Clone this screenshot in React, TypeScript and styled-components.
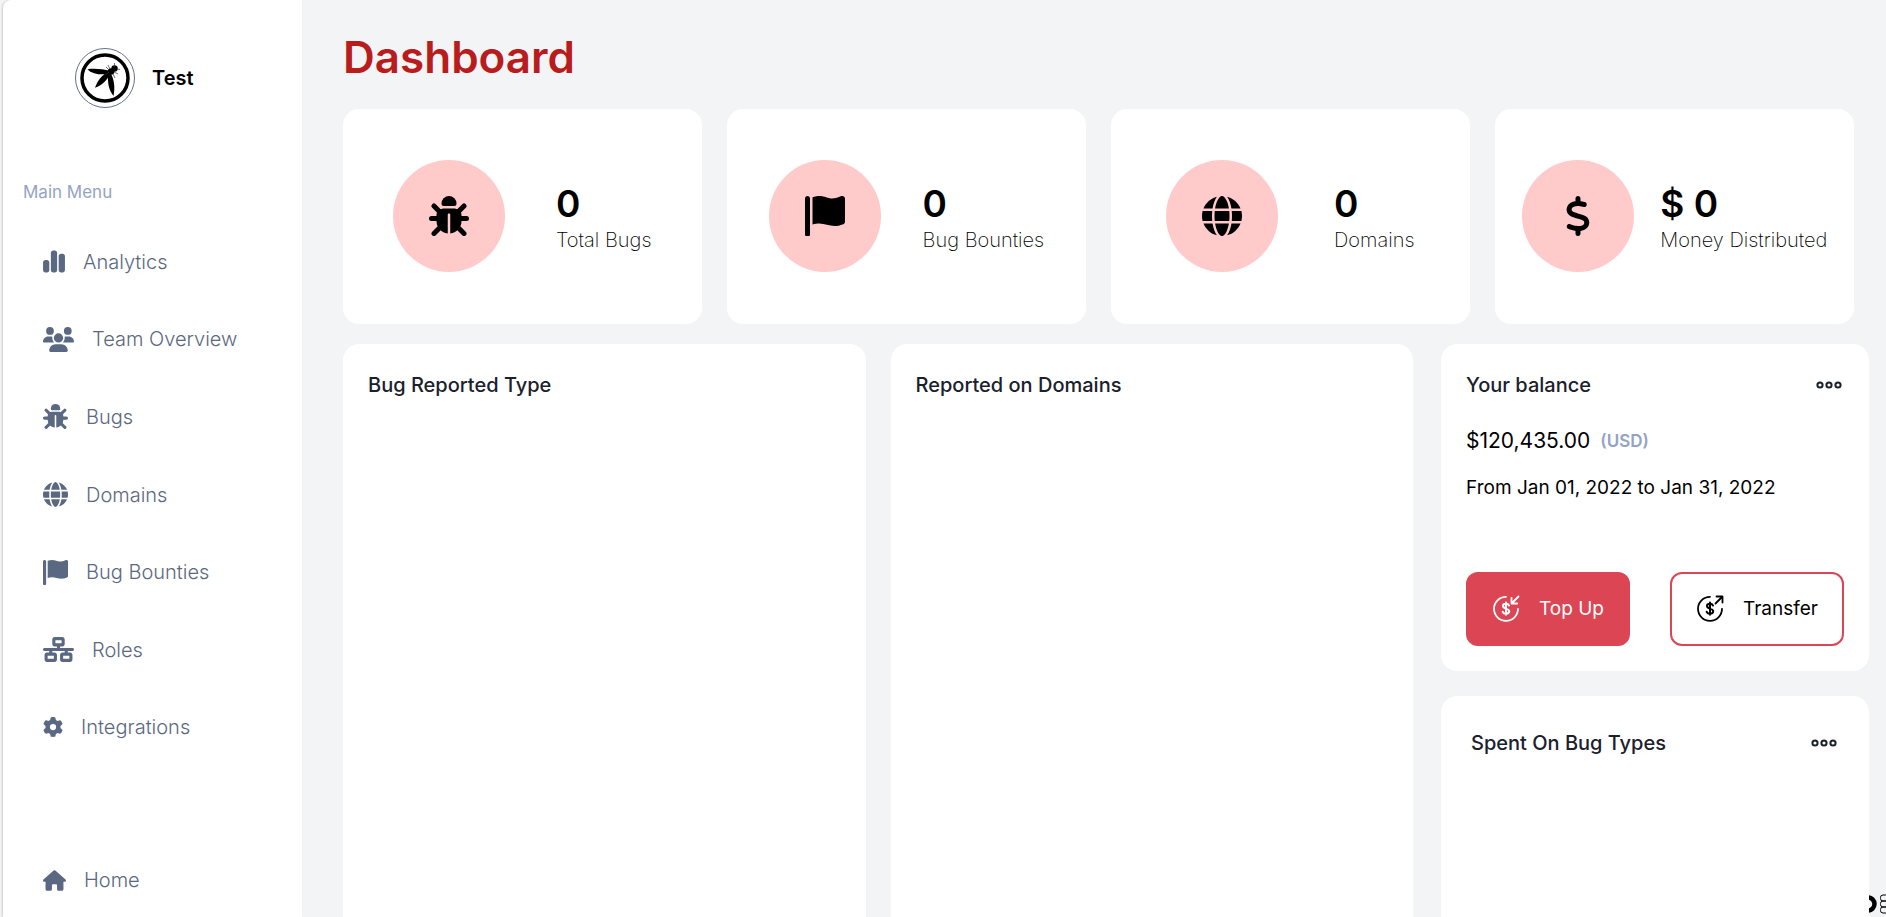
import React from 'react';
import styled, { createGlobalStyle, css } from 'styled-components';
import {
  FaChartSimple,
  FaDollarSign,
  FaGear,
  FaGlobe,
  FaHouse,
  FaNetworkWired,
  FaUsers,
} from 'react-icons/fa6';

const GlobalStyle = createGlobalStyle`
  *, *::before, *::after { box-sizing: border-box; }
  body {
    margin: 0;
    background: #f3f4f6;
    color: #000;
    font-family: Inter, 'Open Sans', sans-serif;
    font-size: 20px;
    line-height: 28px;
  }
  h1, h2, p, ul { margin: 0; padding: 0; }
  button { font: inherit; cursor: pointer; }
`;

const Page = styled.div`
  position: relative;
  display: flex;
  height: 100vh;
  overflow: hidden;
`;

/* ---------- sidebar ---------- */

const Sidebar = styled.aside`
  flex: none;
  width: 299px;
  margin-left: 3px;
  background: #fff;
  border-top-left-radius: 8px;
  box-shadow: -1px 0 2px rgba(0, 0, 0, 0.15);
`;

const Brand = styled.div`
  display: flex;
  align-items: center;
  gap: 17px;
  padding: 48px 0 0 72px;
  font-weight: 600;
`;

const MenuTitle = styled.p`
  padding: 70px 0 17px 20px;
  color: #94a3c4;
  font-size: 17px;
`;

const Menu = styled.ul`
  display: flex;
  flex-direction: column;
  height: 543px;
  list-style: none;
`;

const MenuItem = styled.li`
  display: flex;
  flex: 1;
`;

const MenuLink = styled.a`
  display: flex;
  align-items: center;
  gap: 18px;
  padding-left: 40px;
  color: #5b6882;
  font-weight: 300;
  text-decoration: none;
`;

const ChartIcon = styled(FaChartSimple)`
  width: 22px;
  height: 25px;
`;

const MenuFooter = styled.div`
  padding-top: 100px;
`;

/* ---------- content ---------- */

const Main = styled.main`
  display: flex;
  flex: 1;
  flex-direction: column;
  min-width: 0;
  padding: 33px 17px 0 41px;
`;

const Title = styled.h1`
  margin-bottom: 28px;
  color: #b91c1c;
  font-size: 44px;
  font-weight: 600;
  line-height: 48px;
`;

const Stats = styled.section`
  display: grid;
  grid-template-columns: repeat(4, 1fr);
  gap: 25px;
  margin: 0 15px 20px 0;
`;

const cardSurface = css`
  background: #fff;
  border-radius: 16px;
`;

const StatCard = styled.article`
  ${cardSurface}
  display: flex;
  align-items: center;
  justify-content: space-evenly;
  height: 215px;
  padding-bottom: 2px;
`;

const StatIcon = styled.div`
  display: grid;
  place-items: center;
  width: 112px;
  height: 112px;
  border-radius: 50%;
  background: #fecaca;
`;

const StatText = styled.div`
  padding-top: 4px;
`;

const StatValue = styled.p`
  font-size: 37px;
  font-weight: 600;
  line-height: 44px;
`;

const StatLabel = styled.p`
  font-weight: 200;
`;

const Lower = styled.div`
  display: flex;
  flex: 1;
  gap: 28px;
`;

const Charts = styled.section`
  display: grid;
  flex: 1;
  grid-template-columns: 1fr 1fr;
  gap: 25px;
`;

const Panel = styled.section`
  ${cardSurface}
  min-height: 640px;
  padding: 27px 25px;
`;

const SideColumn = styled.div`
  display: flex;
  flex: none;
  flex-direction: column;
  gap: 25px;
  width: 428px;
`;

const BalanceCard = styled.section`
  ${cardSurface}
  padding: 27px 25px 25px;
`;

const SpentCard = styled.section`
  ${cardSurface}
  flex: 1;
  min-height: 400px;
  padding: 33px 30px;
`;

const PanelHead = styled.header`
  display: flex;
  align-items: center;
  justify-content: space-between;
`;

const PanelTitle = styled.h2`
  color: #1a202c;
  font-size: 20px;
  font-weight: 500;
`;

const MoreButton = styled.button`
  display: flex;
  padding: 0 2px;
  border: 0;
  background: none;
`;

const Amount = styled.p`
  display: flex;
  align-items: center;
  gap: 10px;
  margin-top: 28px;
  font-size: 21px;
`;

const Currency = styled.span`
  color: #94a3c4;
  font-size: 17px;
  font-weight: 600;
`;

const Period = styled.p`
  margin-top: 19px;
  font-size: 19px;
`;

const Actions = styled.div`
  display: flex;
  justify-content: space-between;
  margin-top: 70px;
`;

const ActionButton = styled.button<{ $filled?: boolean }>`
  display: flex;
  align-items: center;
  gap: 19px;
  height: 74px;
  padding: 0 24px;
  border: 2px solid #dc4654;
  border-radius: 12px;
  background: ${(p) => (p.$filled ? '#dc4654' : '#fff')};
  color: ${(p) => (p.$filled ? '#fff' : '#000')};
  font-size: 19px;
  white-space: nowrap;
`;

const EdgeMark = styled.svg`
  position: absolute;
  right: 0;
  bottom: 3px;
`;

/* ---------- drawings ---------- */

const BugIcon = ({ size }: { size: number }) => (
  <svg width={size} height={size} viewBox="0 0 512 512" fill="currentColor" aria-hidden="true">
    <path d="M352 96v4a28 28 0 0 1-28 28H188a28 28 0 0 1-28-28v-4a96 96 0 0 1 192 0z" />
    <path d="M200 160h112c56 0 104 30 104 84v76c0 84-66 152-144 159V240c0-9-7-16-16-16s-16 7-16 16v239C162 472 96 404 96 320v-76c0-54 48-84 104-84z" />
    <path
      d="M64 128l76 76M448 128l-76 76M32 288h90M390 288h90M64 480l86-86M448 480l-86-86"
      fill="none"
      stroke="currentColor"
      strokeWidth="64"
      strokeLinecap="round"
    />
  </svg>
);

const FlagIcon = ({ size }: { size: number }) => (
  <svg width={size} height={size} viewBox="0 0 512 512" fill="currentColor" aria-hidden="true">
    <path d="M64 496C64 504.800 56.750 512 48 512h-32C7.250 512 0 504.800 0 496V32c0-17.750 14.250-32 32-32s32 14.250 32 32V496zM476.300 0c-6.365 0-13.010 1.350-19.340 4.233c-45.690 20.860-79.560 27.940-107.800 27.940c-59.960 0-94.810-31.860-163.900-31.870C160.900 .3055 131.600 4.867 96 15.750v350.500c32-9.984 59.870-14.100 84.850-14.100c73.630 0 124.900 31.780 198.600 31.780c31.910 0 68.020-5.971 111.100-23.090C504.100 355.900 512 344.400 512 332.100V30.730C512 11.100 495.300 0 476.300 0z" />
  </svg>
);

const Logo = () => (
  <svg width="60" height="60" viewBox="0 0 60 60" role="img" aria-label="Team logo">
    <circle cx="30" cy="30" r="29.500" fill="#fff" stroke="#64708a" />
    <circle cx="30" cy="30" r="23" fill="none" stroke="#000" strokeWidth="3.500" />
    <path d="M12.500 21.200C19 20.200 28 21 35 23l-1 3C26 26.800 17 26.500 12.500 21.200z" />
    <path d="M36 24.500C32 32.500 27 37.500 20 39.800C22 33.500 27 27 33 23.500z" />
    <path d="M35.500 25c3 5 5 13 3 23C33.500 42 32 33 33.500 24z" />
    <circle cx="36" cy="23.500" r="3.300" />
    <circle cx="39.500" cy="20.500" r="3.200" />
    <path
      d="M31 19l3 3M33 17l2 4M39.500 15v4M42 21l3 .5M39 24l4 2M38 26l2 4M30 27l4-3"
      stroke="#333"
      strokeWidth=".7"
      fill="none"
    />
  </svg>
);

const Dots = () => (
  <svg width="26" height="8" viewBox="0 0 26 8" fill="none" stroke="#1a202c" strokeWidth="2">
    <circle cx="4" cy="4" r="2.600" />
    <circle cx="13" cy="4" r="2.600" />
    <circle cx="22" cy="4" r="2.600" />
  </svg>
);

const CoinIcon = ({ out }: { out?: boolean }) => (
  <svg width="28" height="28" viewBox="0 0 28 28" aria-hidden="true">
    <g fill="none" stroke="currentColor" strokeWidth="1.800" strokeLinecap="round" strokeLinejoin="round">
      <path d="M14 1.800A12 12 0 1 0 26 13.800" />
      <path d={out ? 'M19.500 8.500L26.500 1.500M20.500 1.500h6v6' : 'M26.500 1.500L19.500 8.500M19.500 2.800v5.700h5.700'} />
      <path d="M17 10.500c-.6-1.200-1.700-1.700-3-1.700c-1.800 0-3 .9-3 2.300c0 3.400 6.200 1.700 6.200 5.200c0 1.500-1.300 2.400-3.200 2.400c-1.500 0-2.800-.6-3.300-1.900M14 7.600v12.200" strokeWidth="2" />
    </g>
  </svg>
);

const menu = [
  { label: 'Analytics', icon: <ChartIcon /> },
  { label: 'Team Overview', icon: <FaUsers size={31} /> },
  { label: 'Bugs', icon: <BugIcon size={25} /> },
  { label: 'Domains', icon: <FaGlobe size={25} /> },
  { label: 'Bug Bounties', icon: <FlagIcon size={25} /> },
  { label: 'Roles', icon: <FaNetworkWired size={31} /> },
  { label: 'Integrations', icon: <FaGear size={20} /> },
];

const stats = [
  { value: '0', label: 'Total Bugs', icon: <BugIcon size={40} /> },
  { value: '0', label: 'Bug Bounties', icon: <FlagIcon size={40} /> },
  { value: '0', label: 'Domains', icon: <FaGlobe size={40} /> },
  { value: '$ 0', label: 'Money Distributed', icon: <FaDollarSign size={40} /> },
];

export default function App() {
  return (
    <Page>
      <GlobalStyle />
      <EdgeMark width="17" height="20" viewBox="0 0 17 20" fill="none" stroke="#000" aria-hidden="true">
        <circle cx="-1" cy="10" r="6.500" strokeWidth="4.500" />
        <rect x="11.500" y="1" width="12" height="6" rx="2.500" />
        <rect x="11.500" y="7" width="12" height="6" rx="2.500" />
        <rect x="11.500" y="13" width="12" height="6" rx="2.500" />
      </EdgeMark>

      <Sidebar>
        <Brand>
          <Logo />
          Test
        </Brand>
        <MenuTitle>Main Menu</MenuTitle>
        <nav>
          <Menu>
            {menu.map((m) => (
              <MenuItem key={m.label}>
                <MenuLink href="#">
                  {m.icon}
                  {m.label}
                </MenuLink>
              </MenuItem>
            ))}
          </Menu>
          <MenuFooter>
            <MenuLink href="#">
              <FaHouse size={23} />
              Home
            </MenuLink>
          </MenuFooter>
        </nav>
      </Sidebar>

      <Main>
        <Title>Dashboard</Title>
        <Stats>
          {stats.map((s) => (
            <StatCard key={s.label}>
              <StatIcon>{s.icon}</StatIcon>
              <StatText>
                <StatValue>{s.value}</StatValue>
                <StatLabel>{s.label}</StatLabel>
              </StatText>
            </StatCard>
          ))}
        </Stats>
        <Lower>
          <Charts>
            <Panel>
              <PanelTitle>Bug Reported Type</PanelTitle>
            </Panel>
            <Panel>
              <PanelTitle>Reported on Domains</PanelTitle>
            </Panel>
          </Charts>
          <SideColumn>
            <BalanceCard>
              <PanelHead>
                <PanelTitle>Your balance</PanelTitle>
                <MoreButton aria-label="Balance options">
                  <Dots />
                </MoreButton>
              </PanelHead>
              <Amount>
                $120,435.00 <Currency>(USD)</Currency>
              </Amount>
              <Period>From Jan 01, 2022 to Jan 31, 2022</Period>
              <Actions>
                <ActionButton $filled>
                  <CoinIcon />
                  Top Up
                </ActionButton>
                <ActionButton>
                  <CoinIcon out />
                  Transfer
                </ActionButton>
              </Actions>
            </BalanceCard>
            <SpentCard>
              <PanelHead>
                <PanelTitle>Spent On Bug Types</PanelTitle>
                <MoreButton aria-label="Spending options">
                  <Dots />
                </MoreButton>
              </PanelHead>
            </SpentCard>
          </SideColumn>
        </Lower>
      </Main>
    </Page>
  );
}
